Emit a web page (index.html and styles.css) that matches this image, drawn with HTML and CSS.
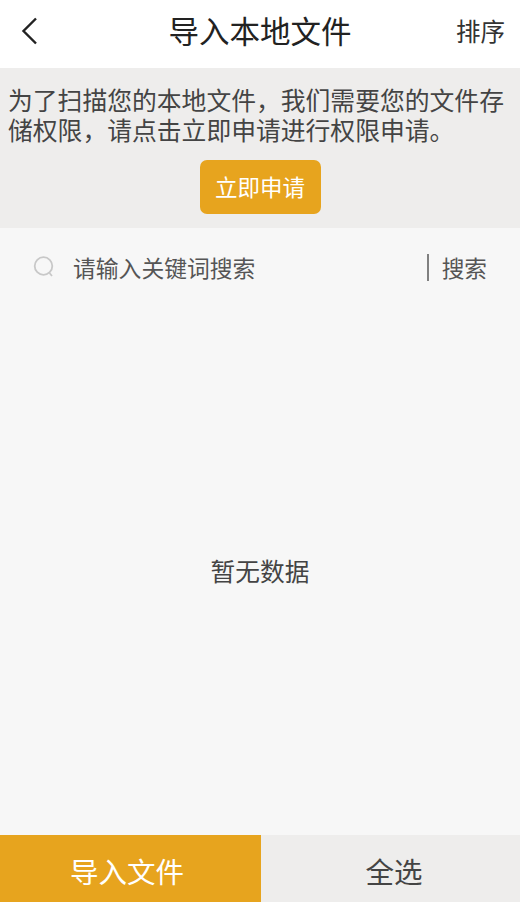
FILE: index.html
```html
<!DOCTYPE html>
<html lang="zh-CN">
<head>
<meta charset="utf-8">
<title>导入本地文件</title>
<link rel="stylesheet" href="styles.css">
</head>
<body>
<div class="page">
  <header class="nav">
    <svg class="back" viewBox="0 0 20 30" width="20" height="30"><path d="M16 2.500 L3.500 15 L16 27.500" fill="none" stroke="#222" stroke-width="2.400"/></svg>
    <h1 class="title">导入本地文件</h1>
    <span class="sort">排序</span>
  </header>
  <section class="notice">
    <p class="notice-text">为了扫描您的本地文件，我们需要您的文件存储权限，请点击立即申请进行权限申请。</p>
    <button class="apply">立即申请</button>
  </section>
  <div class="search">
    <svg class="search-icon" viewBox="0 0 22 22" width="22" height="22"><circle cx="10.500" cy="10" r="8.800" fill="none" stroke="#c8c8c8" stroke-width="1.800"/><path d="M16.500 17 L19 20" stroke="#c8c8c8" stroke-width="1.800" fill="none"/></svg>
    <span class="placeholder">请输入关键词搜索</span>
    <span class="search-btn">搜索</span>
  </div>
  <main class="empty">暂无数据</main>
  <footer class="actions">
    <div class="action primary">导入文件</div>
    <div class="action secondary">全选</div>
  </footer>
</div>
</body>
</html>
```
FILE: styles.css
```css
* { box-sizing: border-box; }
html, body { margin: 0; padding: 0; }
body { font-family: "Noto Sans CJK SC", "Noto Sans", sans-serif; background: #f7f7f7; }
.page { width: 520px; height: 902px; display: flex; flex-direction: column; overflow: hidden; }
.nav { height: 68px; background: #fff; display: flex; align-items: center; position: relative; padding: 0 15px 6px 20px; justify-content: space-between; }
.back { display: block; }
.title { position: absolute; left: 0; right: 0; top: 8px; margin: 0; text-align: center; font-size: 30.500px; line-height: 44px; font-weight: 400; color: #222; }
.sort { font-size: 24.500px; line-height: 34px; color: #333; }
.notice { height: 160px; background: #eeedec; padding: 16px 8px 0; display: flex; flex-direction: column; align-items: center; }
.notice-text { margin: 0; width: 100%; font-size: 24.800px; line-height: 30px; color: #444; }
.apply { margin-top: 16px; width: 121px; height: 54px; border: 0; padding: 0 0 2px; border-radius: 7px; background: #e7a41e; color: #fff; font: inherit; font-size: 22.500px; }
.search { height: 80px; display: flex; align-items: center; padding: 0 33px 2px 33px; }
.search-icon { flex: none; }
.placeholder { margin-left: 18px; flex: 1; font-size: 22.800px; color: #555; }
.search-btn { border-left: 2px solid #808080; padding-left: 13px; margin-left: 1px; height: 27px; line-height: 27px; font-size: 22.700px; color: #555; }
.empty { flex: 1; display: flex; align-items: center; justify-content: center; font-size: 24.700px; color: #444; padding-bottom: 4px; }
.actions { height: 67px; display: flex; }
.action { display: flex; align-items: center; justify-content: center; font-size: 28.500px; padding-top: 4px; }
.primary { width: 261px; background: #e7a41e; color: #fff; padding-right: 7px; }
.secondary { width: 259px; background: #eeedec; color: #444; padding-left: 7px; }
```
